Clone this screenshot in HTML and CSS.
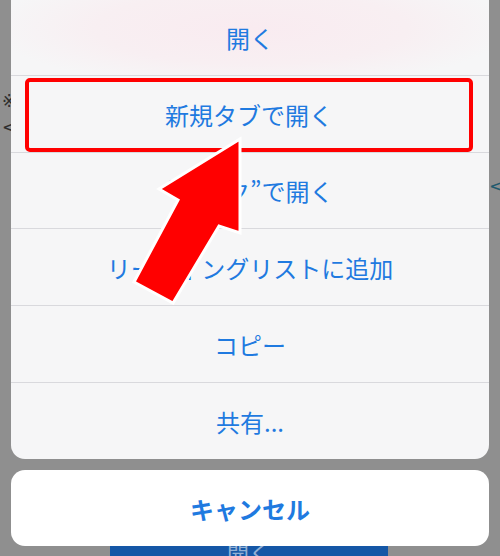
FILE: index.html
```html
<!DOCTYPE html>
<html lang="ja">
<head>
    <meta charset="UTF-8">
    <meta name="viewport" content="width=device-width, initial-scale=1.0">
    <title>リンクメニュー</title>
    <link rel="stylesheet" href="styles.css">
</head>
<body>
    <!-- page behind the dimmed overlay -->
    <div class="behind-left">
        <span>※</span>
        <span>&lt;</span>
    </div>
    <div class="behind-right">&lt;</div>

    <div class="screen">
        <div class="sheet">
            <div class="row row-first">開く</div>
            <div class="row row-marked">
                <div class="marker">新規タブで開く</div>
            </div>
            <div class="row">“リンク”で開く</div>
            <div class="row">リーディングリストに追加</div>
            <div class="row">コピー</div>
            <div class="row row-last">共有...</div>
        </div>

        <div class="cancel">キャンセル</div>

        <div class="page-button">開く</div>
    </div>

    <svg class="arrow" width="500" height="556" viewBox="0 0 500 556">
        <polygon points="240,139 240,233 219,226 173,303 134,282 178,200 159,189"
                 fill="#ff0000" stroke="#ffffff" stroke-width="3" stroke-linejoin="miter"/>
    </svg>
</body>
</html>
```

FILE: styles.css
```css
body {
    margin: 0;
    width: 500px;
    height: 556px;
    overflow: hidden;
    background: #8f8f8f;
    font-family: "Noto Sans CJK JP", "Noto Sans", sans-serif;
    position: relative;
}
.behind-left {
    position: absolute;
    left: 2px;
    top: 92px;
    display: flex;
    flex-direction: column;
    gap: 8px;
    font-family: "DejaVu Sans", sans-serif;
    font-size: 17px;
    line-height: 18px;
    color: #2e2e2e;
}
.behind-right {
    position: absolute;
    left: 489px;
    top: 175px;
    font-family: "DejaVu Sans", sans-serif;
    font-size: 18px;
    color: #1f5a6e;
}
.screen {
    padding: 0 11px;
    display: flex;
    flex-direction: column;
    position: relative;
}
.sheet {
    background: #f6f6f7;
    border-radius: 0 0 14px 14px;
    overflow: hidden;
}
.row {
    height: 76px;
    display: flex;
    align-items: center;
    justify-content: center;
    font-size: 24px;
    color: #1f7ae0;
    border-bottom: 1px solid #d9d9dd;
}
.row-first {
    height: 75px;
    background: radial-gradient(ellipse 260px 60px at 240px 28px, #f9ebf0 0%, #f8eff2 60%, #f6f6f7 100%);
}
.row-last {
    border-bottom: none;
}
.row-marked {
    padding: 2px 16px 0 14px;
    align-items: stretch;
    border-bottom: none;
    height: 74px;
    box-shadow: 0 1px 0 #d9d9dd;
}
.marker {
    flex: 1;
    display: flex;
    align-items: center;
    justify-content: center;
    border: 4px solid #ff0000;
    border-radius: 5px;
    padding-bottom: 1px;
}
.cancel {
    margin-top: 11px;
    height: 76px;
    background: #ffffff;
    border-radius: 14px;
    display: flex;
    align-items: center;
    justify-content: center;
    font-size: 24px;
    font-weight: 700;
    color: #1f7ae0;
}
.page-button {
    align-self: center;
    width: 278px;
    height: 30px;
    margin-left: -2px;
    background: #1557a6;
    border-radius: 6px;
    color: rgba(255, 255, 255, 0.55);
    font-size: 22px;
    line-height: 22px;
    text-align: center;
    margin-top: -6px;
    position: relative;
    z-index: -1;
}
.arrow {
    position: absolute;
    left: 0;
    top: 0;
}
```
